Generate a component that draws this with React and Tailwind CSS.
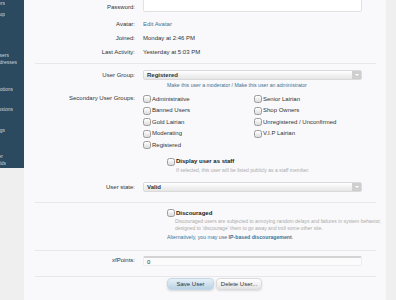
import React from 'react'

const navItems = [
  { text: 'Search for Users', end: 5, mt: 0 },
  { text: 'List Users by Group', end: 5, mt: 5 },
  { text: 'Email Users', end: 9, mt: 35 },
  { text: 'Discouraged IP Addresses', end: 17, mt: 1 },
  { text: 'User Group Promotions', end: 13, mt: 21 },
  { text: 'User Group Permissions', end: 13, mt: 14 },
  { text: 'Warnings', end: 5, mt: 15 },
  { text: 'Custom User', end: 3, mt: 20 },
  { text: 'Custom Fields', end: 6, mt: 1 },
]

const leftGroups = ['Administrative', 'Banned Users', 'Gold Lairian', 'Moderating', 'Registered']
const rightGroups = ['Senior Lairian', 'Shop Owners', 'Unregistered / Unconfirmed', 'V.I.P Lairian']

function Box() {
  return <span className="mr-[1px] inline-block h-[8px] w-[8px] shrink-0 rounded-[2.5px] border border-[#9a9a9a] bg-gradient-to-b from-white to-[#dcdcdc]" />
}

function Check({ label, bold }) {
  return (
    <div className="flex h-[11.5px] items-center">
      <Box />
      <span className={`whitespace-nowrap text-[6px] ${bold ? 'font-bold text-[#222]' : 'text-[#333]'}`}>{label}</span>
    </div>
  )
}

function Select({ value }) {
  return (
    <div className="flex h-[10px] w-[219px] items-stretch rounded-[2px] border border-[#dadada] bg-gradient-to-b from-white to-[#e6e6e6]">
      <span className="flex-1 pl-[3px] text-[6px] font-bold leading-[9px] text-[#333]">{value}</span>
      <span className="flex w-[9px] items-center justify-center bg-[#cfcfcf]">
        <span className="h-0 w-0 border-x-[2px] border-t-[2px] border-x-transparent border-t-white" />
      </span>
    </div>
  )
}

function Row({ label, children, className = '' }) {
  return (
    <div className={`flex items-center ${className}`}>
      <div className="w-[112px] shrink-0 pr-[1px] text-right text-[6px] text-[#333]">{label}</div>
      <div className="ml-[7px] flex items-center text-[6px] text-[#333]">{children}</div>
    </div>
  )
}

function Rule({ className = '' }) {
  return <div className={`ml-[11px] mr-[10px] h-px bg-[#e7e7ec] ${className}`} />
}

export default function App() {
  return (
    <div className="flex h-[300px] w-[396px] overflow-hidden bg-[#f9f9fb] font-['Liberation_Sans',Arial,sans-serif]">
      <aside className="flex w-[24px] shrink-0 flex-col bg-[#efefef]">
        <div className="h-[168px] bg-[#2c4a5f] text-[5px] leading-[6px] text-[#c9d6df]">
          {navItems.map((item) => (
            <div
              key={item.text}
              className="flex justify-end overflow-hidden whitespace-nowrap"
              style={{ width: item.end, marginTop: item.mt }}
            >
              {item.text}
            </div>
          ))}
        </div>
      </aside>

      <main className="flex-1">
        <div className="flex h-[14px] items-start">
          <div className="w-[112px] shrink-0 pr-[1px] text-right text-[6px] leading-[14px] text-[#333]">Password:</div>
          <div className="-mt-[6px] ml-[7px] h-[18px] w-[219px] rounded-[2px] border border-[#e2e2e6] bg-white" />
        </div>
        <Row label="Avatar:" className="mt-[3px] h-[14px]">
          <span className="text-[#3d7393]">Edit Avatar</span>
        </Row>
        <Row label="Joined:" className="h-[14px]">Monday at 2:46 PM</Row>
        <Row label="Last Activity:" className="h-[14px]">Yesterday at 5:03 PM</Row>

        <Rule className="mt-[4px]" />

        <Row label="User Group:" className="mt-[6px] h-[10px]">
          <Select value="Registered" />
        </Row>
        <div className="ml-[143px] mt-[1px] flex h-[10px] items-center whitespace-nowrap text-[5.2px] text-[#3d7393]">
          Make this user a moderator / Make this user an administrator
        </div>

        <div className="mt-[2.25px] flex">
          <div className="w-[112px] shrink-0 pr-[1px] text-right text-[6px] leading-[11.5px] text-[#333]">Secondary User Groups:</div>
          <div className="ml-[7px] grid grid-cols-[111px_108px]">
            <div>
              {leftGroups.map((g) => <Check key={g} label={g} />)}
            </div>
            <div>
              {rightGroups.map((g) => <Check key={g} label={g} />)}
            </div>
          </div>
        </div>

        <div className="ml-[143px] mt-[6px] flex h-[10px] items-center">
          <Box />
          <span className="text-[6px] font-bold text-[#222]">Display user as staff</span>
        </div>
        <div className="ml-[152px] flex h-[7px] items-center whitespace-nowrap text-[5px] text-[#ababab]">
          If selected, this user will be listed publicly as a staff member.
        </div>

        <Row label="User state:" className="mt-[8.25px] h-[10px]">
          <Select value="Valid" />
        </Row>

        <Rule className="mt-[10px]" />

        <div className="ml-[143px] mt-[5.3px] flex h-[10px] items-center">
          <Box />
          <span className="text-[6px] font-bold text-[#222]">Discouraged</span>
        </div>
        <div className="ml-[151px] whitespace-nowrap text-[5px] leading-[6.7px] text-[#ababab]">
          <div>Discouraged users are subjected to annoying random delays and failures in system behavior,</div>
          <div>designed to 'discourage' them to go away and troll some other site.</div>
        </div>
        <div className="ml-[143px] mt-[2.3px] flex h-[8px] items-center whitespace-nowrap text-[5.2px] text-[#3d7393]">
          Alternatively, you may use&nbsp;<span className="font-bold">IP-based discouragement</span>.
        </div>

        <Rule className="mt-[7.6px]" />

        <Row label="xfPoints:" className="mt-[5px] h-[10px]">
          <div className="h-[10px] w-[219px] rounded-[2px] border border-[#ececf0] border-t-2 border-t-[#d3d3d6] bg-[#fbfbfc] pl-[3px] text-[6px] leading-[8px] text-[#333]">0</div>
        </Row>

        <Rule className="mt-[10px]" />

        <div className="ml-[143px] mt-[1.5px] flex gap-[2px]">
          <button className="h-[12px] w-[47px] rounded-[4px] border border-[#c6d8e6] bg-gradient-to-b from-[#e6f0f7] to-[#b9d2e4] text-[6px] text-[#234] shadow-[0_1px_2px_rgba(0,0,0,0.15)]">Save User</button>
          <button className="h-[12px] w-[46px] rounded-[4px] border border-[#dadada] bg-gradient-to-b from-white to-[#e4e4e4] text-[6px] text-[#333] shadow-[0_1px_2px_rgba(0,0,0,0.12)]">Delete User...</button>
        </div>
      </main>

      <div className="w-[10px] shrink-0 bg-[#efefef]" />
    </div>
  )
}
